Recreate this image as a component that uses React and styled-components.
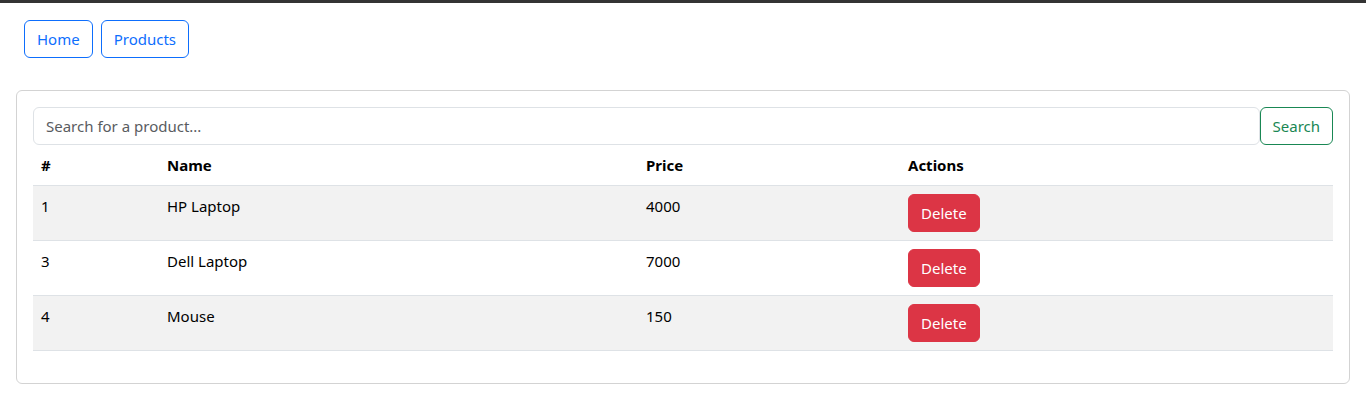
import React, { useState } from 'react';
import styled, { createGlobalStyle } from 'styled-components';

const Global = createGlobalStyle`
  * { box-sizing: border-box; }
  body {
    margin: 0;
    font-family: "Segoe UI", "Noto Sans", "Liberation Sans", sans-serif;
    font-size: 15px;
    line-height: 24px;
    color: #212529;
    background: #fff;
    border-top: 3px solid #343434;
  }
`

const Nav = styled.nav`
  display: flex;
  gap: 8px;
  padding: 17px 24px 0;
`
const NavLink = styled.a`
  display: inline-block;
  padding: 6px 12px;
  border: 1px solid #0d6efd;
  border-radius: 6px;
  color: #0d6efd;
  text-decoration: none;
  line-height: 24px;
`
const Card = styled.div`
  margin: 32px 16px 0;
  border: 1px solid #d3d3d3;
  border-radius: 6px;
  padding: 16px 16px 16px;
`
const SearchRow = styled.div`
  display: flex;
`
const SearchInput = styled.input`
  flex: 1;
  height: 38px;
  padding: 6px 12px;
  font: inherit;
  color: #212529;
  border: 1px solid #dee2e6;
  border-radius: 6px;
  outline: none;
  &::placeholder { color: #595c5f; }
`
const SearchButton = styled.button`
  height: 38px;
  padding: 6px 12px;
  font: inherit;
  color: #198754;
  background: #fff;
  border: 1px solid #198754;
  border-radius: 6px;
`
const Table = styled.table`
  width: 100%;
  border-collapse: collapse;
  margin-bottom: 16px;
`
const Th = styled.th`
  text-align: left;
  font-weight: 700;
  color: #000;
  padding: 8px;
  line-height: 24px;
  border-bottom: 1px solid #dee2e6;
  width: ${p => p.$w || 'auto'};
`
const Tr = styled.tr`
  background: ${p => (p.$odd ? '#f2f2f2' : '#fff')};
`
const Td = styled.td`
  padding: 8px;
  line-height: 24px;
  vertical-align: top;
  color: #000;
  border-bottom: 1px solid #dee2e6;
`
const DeleteButton = styled.button`
  padding: 6px 12px;
  font: inherit;
  line-height: 24px;
  color: #fff;
  background: #dc3545;
  border: 1px solid #dc3545;
  border-radius: 6px;
`

const initial = [
  { id: 1, name: 'HP Laptop', price: 4000 },
  { id: 3, name: 'Dell Laptop', price: 7000 },
  { id: 4, name: 'Mouse', price: 150 },
];

function App() {
  const [products] = useState(initial);
  return (
    <>
      <Global />
      <Nav>
        <NavLink href="#">Home</NavLink>
        <NavLink href="#">Products</NavLink>
      </Nav>
      <Card>
        <SearchRow>
          <SearchInput placeholder="Search for a product..." />
          <SearchButton>Search</SearchButton>
        </SearchRow>
        <Table>
          <thead>
            <tr>
              <Th $w="126px">#</Th>
              <Th $w="479px">Name</Th>
              <Th $w="262px">Price</Th>
              <Th>Actions</Th>
            </tr>
          </thead>
          <tbody>
            {products.map((p, i) => (
              <Tr key={p.id} $odd={i % 2 === 0}>
                <Td>{p.id}</Td>
                <Td>{p.name}</Td>
                <Td>{p.price}</Td>
                <Td><DeleteButton>Delete</DeleteButton></Td>
              </Tr>
            ))}
          </tbody>
        </Table>
      </Card>
    </>
  );
}

export default App;
